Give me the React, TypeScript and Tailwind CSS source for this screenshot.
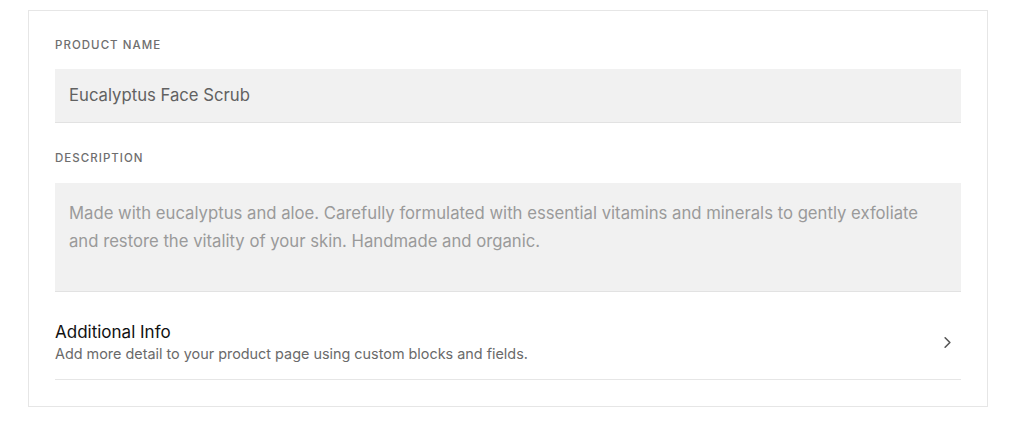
import { ChevronRight } from "lucide-react";

export default function App() {
  return (
    <div className="min-h-screen bg-white pl-[28px] pt-[10px] font-['Inter',sans-serif]">
      <div className="w-[960px] border border-[#e6e6e6] px-[26px] pt-[26px] pb-[26px]">
        {/* Product name */}
        <label className="block text-[11.5px] leading-4 tracking-[0.09em] font-medium text-[#6e6e6e] uppercase">
          Product Name
        </label>
        <div className="mt-4 h-[54px] flex items-center bg-[#f1f1f1] border-b border-[#e2e2e2] px-[14px] text-[16.7px] text-[#616161]">
          Eucalyptus Face Scrub
        </div>

        {/* Description */}
        <label className="mt-[27px] block text-[11.5px] leading-4 tracking-[0.09em] font-medium text-[#6e6e6e] uppercase">
          Description
        </label>
        <div className="mt-[17px] h-[109px] bg-[#f1f1f1] border-b border-[#e2e2e2] px-[14px] pt-4 text-[16.7px] leading-7 text-[#9a9a9a]">
          Made with eucalyptus and aloe. Carefully formulated with essential vitamins and minerals to gently exfoliate
          <br />
          and restore the vitality of your skin. Handmade and organic.
        </div>

        {/* Additional info */}
        <div className="mt-7 flex items-center justify-between border-b border-[#e6e6e6] pb-[15px]">
          <div>
            <div className="text-[17px] leading-6 text-[#111]">Additional Info</div>
            <div className="text-[14.4px] leading-5 text-[#6a6a6a]">
              Add more detail to your product page using custom blocks and fields.
            </div>
          </div>
          <ChevronRight className="mr-[4px] h-[19px] w-[19px] text-[#555]" strokeWidth={2} />
        </div>
      </div>
    </div>
  );
}
